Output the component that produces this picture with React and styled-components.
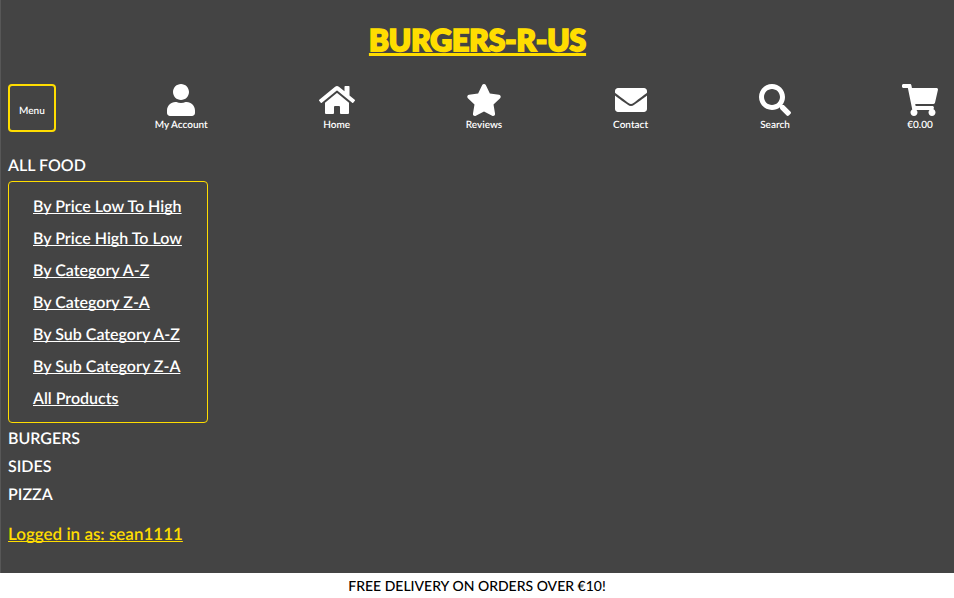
import React from "react";
import styled, { createGlobalStyle } from "styled-components";
import { FaUser, FaHome, FaStar, FaEnvelope, FaSearch, FaShoppingCart } from "react-icons/fa";

const GlobalStyle = createGlobalStyle`
  *, *::before, *::after { box-sizing: border-box; }
  body {
    margin: 0;
    background: #fff;
    color: #000;
    font-family: Lato, sans-serif;
    font-size: 16px;
    line-height: 24px;
    text-rendering: geometricPrecision;
  }
`;

const Header = styled.header`
  padding: 16px 16px 25px 7px;
  background: #444;
  border-left: 1px solid #575757;
  color: #fff;
`;

const Title = styled.h1`
  margin: 0 0 19px;
  padding-left: 9px;
  text-align: center;
  font-size: 30px;
  font-weight: 900;
  line-height: 49px;
`;

const TitleLink = styled.a`
  color: #fd0;
  -webkit-text-stroke: 2px #fd0;
  text-decoration: underline 3px;
  text-underline-offset: 2px;
  text-decoration-skip-ink: none;
`;

const Toolbar = styled.nav`
  display: flex;
  justify-content: space-between;
  align-items: flex-start;
`;

const MenuButton = styled.button`
  height: 48px;
  margin-right: -12px;
  padding: 6px 9px 0;
  background: transparent;
  border: 2px solid #fd0;
  border-radius: 4px;
  color: #fff;
  font: 600 10px/16px Lato, sans-serif;
  text-rendering: inherit;
`;

const ToolLink = styled.a`
  display: flex;
  flex-direction: column;
  align-items: center;
  gap: 1px;
  color: #fff;
  font-size: 10px;
  font-weight: 600;
  line-height: 16px;
  text-decoration: none;

  svg {
    width: ${({ $iconWidth }) => $iconWidth}px;
    height: 32px;
  }
`;

const Categories = styled.ul`
  margin: 19px 0 0;
  padding: 0;
  list-style: none;
`;

const Category = styled.li`
  line-height: 28px;
`;

const CategoryButton = styled.button`
  display: block;
  padding: 0;
  background: none;
  border: 0;
  color: #fff;
  font: 600 16px/28px Lato, sans-serif;
  text-rendering: inherit;
`;

const SubMenu = styled.ul`
  width: 200px;
  margin: 1px 0 2px;
  padding: 9px 24px 7px;
  border: 1px solid #fd0;
  border-radius: 4px;
  list-style: none;
  line-height: 32px;
`;

const SubLink = styled.a`
  color: #fff;
  font-weight: 600;
  white-space: nowrap;
  text-decoration-skip-ink: none;
`;

const Status = styled.p`
  margin: 11px 0 0;
  font-size: 17px;
  font-weight: 600;
  line-height: 28px;

  a {
    color: #fd0;
    text-decoration-skip-ink: none;
  }
`;

const Banner = styled.p`
  margin: 0;
  text-align: center;
  font-size: 14px;
  font-weight: 500;
  line-height: 26px;
`;

const tools = [
  { label: "My Account", Icon: FaUser, width: 28 },
  { label: "Home", Icon: FaHome, width: 36 },
  { label: "Reviews", Icon: FaStar, width: 36 },
  { label: "Contact", Icon: FaEnvelope, width: 32 },
  { label: "Search", Icon: FaSearch, width: 32 },
  { label: "€0.00", Icon: FaShoppingCart, width: 36 },
];

const foodLinks = [
  "By Price Low To High",
  "By Price High To Low",
  "By Category A-Z",
  "By Category Z-A",
  "By Sub Category A-Z",
  "By Sub Category Z-A",
  "All Products",
];

export default function App() {
  return (
    <>
      <GlobalStyle />
      <Header>
        <Title><TitleLink href="#">BURGERS-R-US</TitleLink></Title>
        <Toolbar aria-label="Main">
          <MenuButton type="button">Menu</MenuButton>
          {tools.map(({ label, Icon, width }) => (
            <ToolLink href="#" key={label} $iconWidth={width}>
              <Icon aria-hidden="true" />
              {label}
            </ToolLink>
          ))}
        </Toolbar>
        <Categories>
          <Category>
            <CategoryButton type="button" aria-expanded="true">ALL FOOD</CategoryButton>
            <SubMenu>
              {foodLinks.map((text) => (
                <li key={text}><SubLink href="#">{text}</SubLink></li>
              ))}
            </SubMenu>
          </Category>
          {["BURGERS", "SIDES", "PIZZA"].map((name) => (
            <Category key={name}>
              <CategoryButton type="button" aria-expanded="false">{name}</CategoryButton>
            </Category>
          ))}
        </Categories>
        <Status><a href="#">Logged in as: sean1111</a></Status>
      </Header>
      <Banner>FREE DELIVERY ON ORDERS OVER €10!</Banner>
    </>
  );
}
